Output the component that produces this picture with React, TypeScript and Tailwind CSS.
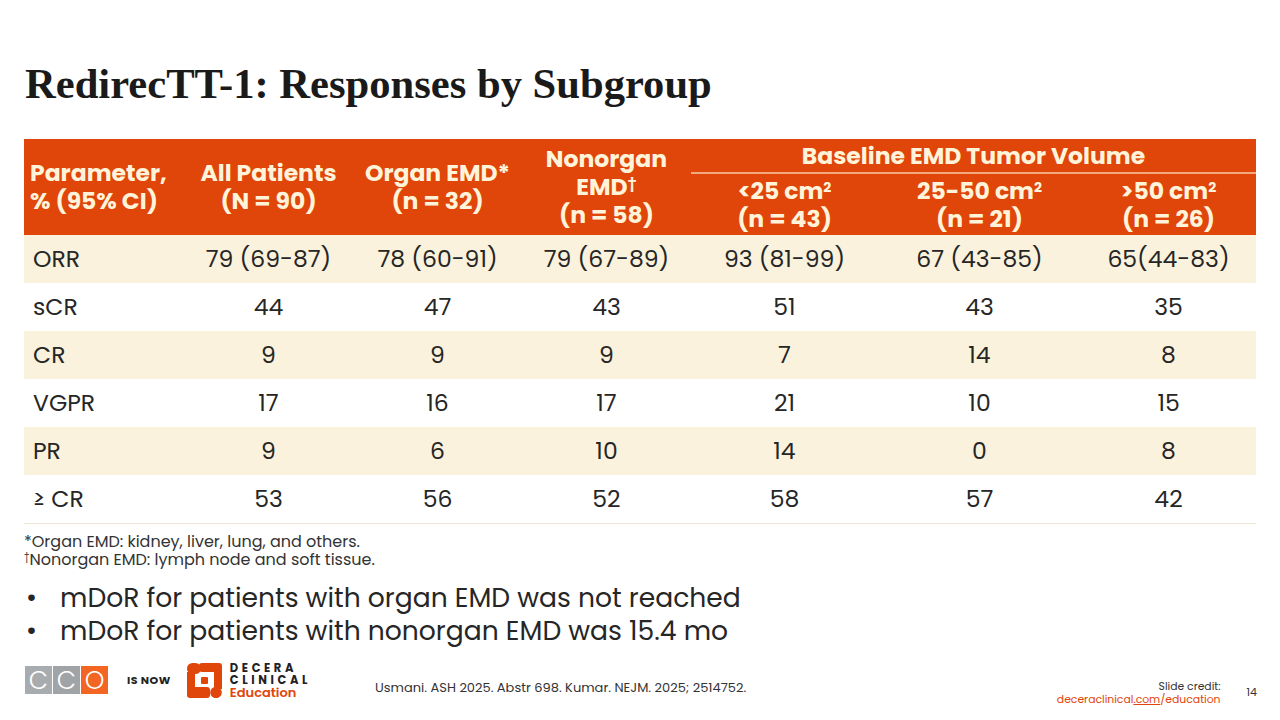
const rows: { label: string; values: string[]; shaded: boolean }[] = [
  { label: "ORR", values: ["79 (69-87)", "78 (60-91)", "79 (67-89)", "93 (81-99)", "67 (43-85)", "65(44-83)"], shaded: true },
  { label: "sCR", values: ["44", "47", "43", "51", "43", "35"], shaded: false },
  { label: "CR", values: ["9", "9", "9", "7", "14", "8"], shaded: true },
  { label: "VGPR", values: ["17", "16", "17", "21", "10", "15"], shaded: false },
  { label: "PR", values: ["9", "6", "10", "14", "0", "8"], shaded: true },
  { label: "≥ CR", values: ["53", "56", "52", "58", "57", "42"], shaded: false },
];

const sans = "font-['Poppins','Open_Sans',sans-serif]";

function DeceraMark() {
  return (
    <svg width="35" height="35" viewBox="0 0 35 35" aria-hidden="true">
      <g fill="#E0450A">
        <rect x="0" y="0" width="14" height="11" rx="5.5" />
        <rect x="12" y="0" width="23" height="9" rx="3" />
        <rect x="0" y="9" width="8" height="17" />
        <rect x="27" y="7" width="8" height="19" />
        <rect x="0" y="24" width="23" height="11" rx="3" />
        <circle cx="29" cy="29.5" r="5.8" />
        <rect x="14" y="14" width="7" height="7" rx="1" />
      </g>
    </svg>
  );
}

export default function App() {
  return (
    <div className={`relative h-[720px] w-[1280px] overflow-hidden bg-white ${sans}`}>
      <h1 className="absolute left-[25px] top-[59px] font-['Liberation_Serif',serif] text-[42.6px] font-bold leading-[50px] text-[#1a1a1a]">
        RedirecTT-1: Responses by Subgroup
      </h1>

      <div className="absolute left-[24px] top-[139px] w-[1232px]">
        <table className="w-full table-fixed border-collapse">
          <colgroup>
            <col className="w-[160px]" />
            <col className="w-[169px]" />
            <col className="w-[169px]" />
            <col className="w-[169px]" />
            <col className="w-[187px]" />
            <col className="w-[203px]" />
            <col className="w-[175px]" />
          </colgroup>
          <thead className="bg-[#E0450A] text-[23.5px] font-bold leading-[28px] text-[#FFF4DA]">
            <tr className="h-[34px]">
              <th rowSpan={2} className="whitespace-nowrap pl-[6px] text-left align-middle font-bold">
                Parameter,
                <br />% (95% CI)
              </th>
              <th rowSpan={2} className="whitespace-nowrap align-middle font-bold">
                All Patients
                <br />(N = 90)
              </th>
              <th rowSpan={2} className="whitespace-nowrap align-middle font-bold">
                Organ EMD*
                <br />(n = 32)
              </th>
              <th rowSpan={2} className="whitespace-nowrap align-middle font-bold">
                Nonorgan
                <br />
                EMD<sup className="text-[14px]">†</sup>
                <br />(n = 58)
              </th>
              <th colSpan={3} className="whitespace-nowrap border-b-2 border-[#F4A87E] align-middle font-bold">
                Baseline EMD Tumor Volume
              </th>
            </tr>
            <tr className="h-[62px]">
              <th className="whitespace-nowrap align-middle font-bold">
                &lt;25 cm<sup className="text-[14px]">2</sup>
                <br />(n = 43)
              </th>
              <th className="whitespace-nowrap align-middle font-bold">
                25-50 cm<sup className="text-[14px]">2</sup>
                <br />(n = 21)
              </th>
              <th className="whitespace-nowrap align-middle font-bold">
                &gt;50 cm<sup className="text-[14px]">2</sup>
                <br />(n = 26)
              </th>
            </tr>
          </thead>
          <tbody className="text-[23.5px] text-[#262626]">
            {rows.map((r) => (
              <tr key={r.label} className={`h-[48px] ${r.shaded ? "bg-[#FAF2DC]" : "bg-white"}`}>
                <td className="pl-[9px] text-left align-middle">{r.label}</td>
                {r.values.map((v, i) => (
                  <td key={i} className="text-center align-middle">
                    {v}
                  </td>
                ))}
              </tr>
            ))}
          </tbody>
        </table>
        <div className="h-px w-full bg-[#EDE6D2]" />
      </div>

      <div className="absolute left-[24px] top-[533px] text-[16px] leading-[18px] text-[#333]">
        <p>*Organ EMD: kidney, liver, lung, and others.</p>
        <p>
          <sup className="text-[10px]">†</sup>Nonorgan EMD: lymph node and soft tissue.
        </p>
      </div>

      <ul className="absolute left-[24px] top-[581px] text-[26.6px] leading-[33px] text-[#262626]">
        <li className="flex">
          <span className="w-[36px] pl-[2px]">•</span>mDoR for patients with organ EMD was not reached
        </li>
        <li className="flex">
          <span className="w-[36px] pl-[2px]">•</span>mDoR for patients with nonorgan EMD was 15.4 mo
        </li>
      </ul>

      <div className="absolute left-0 top-[658px] flex h-[44px] w-full items-center">
        <div className="ml-[25px] flex h-[28px] items-stretch">
          <div className="flex w-[27px] items-center justify-center bg-[#A9ACAE] text-[25px] font-light leading-none text-white">C</div>
          <div className="ml-px flex w-[27px] items-center justify-center bg-[#A0A4A6] text-[25px] font-light leading-none text-white">C</div>
          <div className="ml-px flex w-[27px] items-center justify-center bg-[#F26522] text-[25px] font-light leading-none text-white">O</div>
        </div>
        <span className="ml-[19px] text-[11px] font-bold tracking-[0.5px] text-[#222]">IS NOW</span>
        <div className="ml-[16px]">
          <DeceraMark />
        </div>
        <div className="ml-[8px] flex flex-col text-[11.5px] font-bold leading-[12px]">
          <span className="tracking-[3.6px] text-[#222]">DECERA</span>
          <span className="tracking-[3.6px] text-[#222]">CLINICAL</span>
          <span className="text-[13px] font-semibold leading-[13px] text-[#E0450A]">Education</span>
        </div>
        <span className="ml-[64px] mt-[16px] text-[13px] text-[#333]">Usmani. ASH 2025. Abstr 698. Kumar. NEJM. 2025; 2514752.</span>
        <div className="ml-auto mt-[25px] flex flex-col items-end text-[10.8px] leading-[13px]">
          <span className="text-[#333]">Slide credit:</span>
          <span className="text-[#E0450A]">
            deceraclinical<span className="underline">.com</span>/education
          </span>
        </div>
        <span className="ml-[26px] mr-[23px] mt-[24px] text-[11px] text-[#333]">14</span>
      </div>
    </div>
  );
}
